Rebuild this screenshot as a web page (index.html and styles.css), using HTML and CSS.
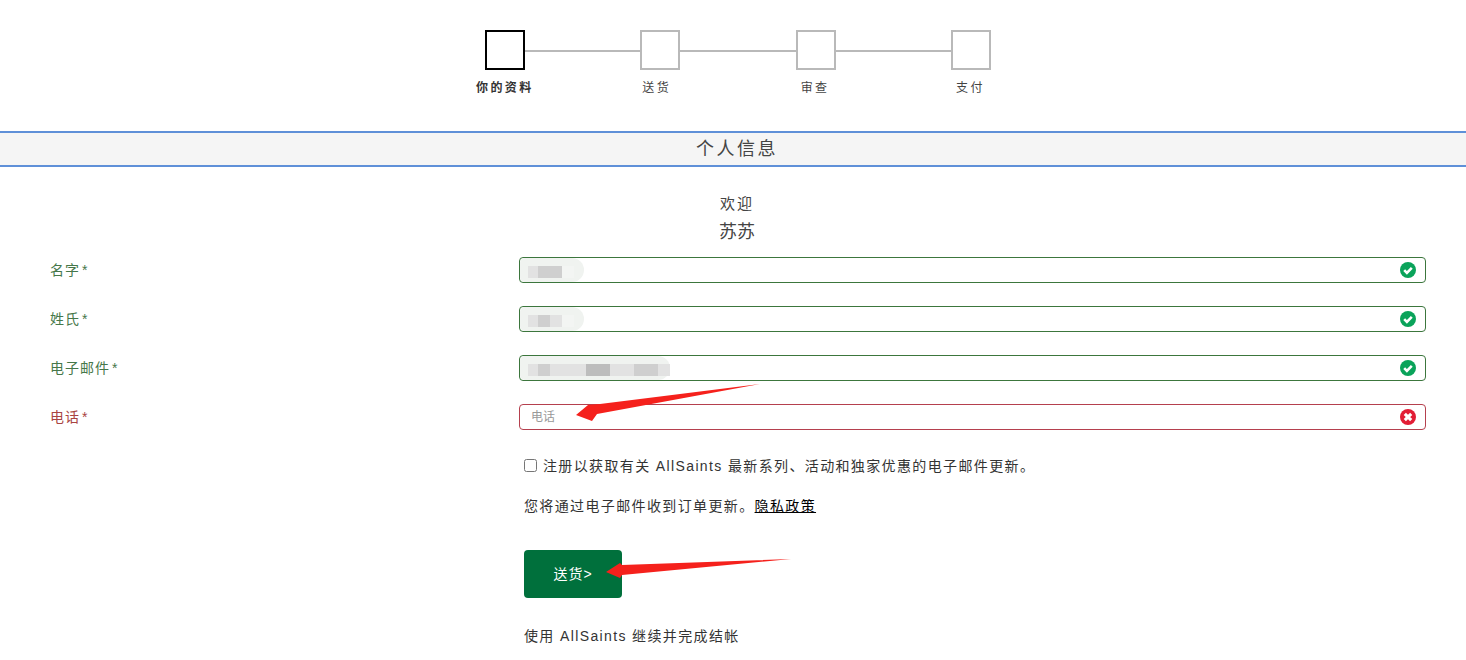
FILE: index.html
```html
<!DOCTYPE html>
<html lang="zh-CN">
<head>
    <meta charset="UTF-8">
    <meta name="viewport" content="width=device-width, initial-scale=1.0">
    <title>个人信息</title>
    <link rel="stylesheet" href="styles.css">
</head>
<body>
    <div class="page">
        <div class="steps">
            <div class="step active"><div class="step-box"></div><span class="step-label">你的资料</span></div>
            <div class="step-line"></div>
            <div class="step"><div class="step-box"></div><span class="step-label nudge">送货</span></div>
            <div class="step-line"></div>
            <div class="step"><div class="step-box"></div><span class="step-label">审查</span></div>
            <div class="step-line"></div>
            <div class="step"><div class="step-box"></div><span class="step-label">支付</span></div>
        </div>

        <h1 class="section-title">个人信息</h1>

        <div class="welcome">
            <p class="welcome-text">欢迎</p>
            <p class="welcome-name">苏苏</p>
        </div>

        <form class="details-form">
            <div class="form-row valid">
                <label>名字<span class="req">*</span></label>
                <div class="field">
                    <div class="blur">
                        <span class="blur-light w10"></span><span class="blur-dark w24"></span><span class="blur-faint w12"></span>
                    </div>
                    <svg class="field-icon" viewBox="0 0 16 16"><circle cx="8" cy="8" r="8" fill="#0aa35a"/><path d="M4.2 8.2l2.7 2.7 4.9-5" fill="none" stroke="#fff" stroke-width="2.6"/></svg>
                </div>
            </div>
            <div class="form-row valid">
                <label>姓氏<span class="req">*</span></label>
                <div class="field">
                    <div class="blur">
                        <span class="blur-light w10"></span><span class="blur-dark w12"></span><span class="blur-light w12"></span><span class="blur-faint w12"></span>
                    </div>
                    <svg class="field-icon" viewBox="0 0 16 16"><circle cx="8" cy="8" r="8" fill="#0aa35a"/><path d="M4.2 8.2l2.7 2.7 4.9-5" fill="none" stroke="#fff" stroke-width="2.6"/></svg>
                </div>
            </div>
            <div class="form-row valid">
                <label>电子邮件<span class="req">*</span></label>
                <div class="field">
                    <div class="blur blur-long">
                        <span class="blur-light w10"></span><span class="blur-dark w12"></span><span class="blur-light w36"></span><span class="blur-darker w24"></span><span class="blur-light w24"></span><span class="blur-dark w24"></span><span class="blur-light w12"></span>
                    </div>
                    <svg class="field-icon" viewBox="0 0 16 16"><circle cx="8" cy="8" r="8" fill="#0aa35a"/><path d="M4.2 8.2l2.7 2.7 4.9-5" fill="none" stroke="#fff" stroke-width="2.6"/></svg>
                </div>
            </div>
            <div class="form-row invalid">
                <label>电话<span class="req">*</span></label>
                <div class="field">
                    <span class="placeholder">电话</span>
                    <svg class="field-icon" viewBox="0 0 16 16"><circle cx="8" cy="8" r="8" fill="#e21d35"/><path d="M4.8 4.8l6.4 6.4M11.2 4.8l-6.4 6.4" fill="none" stroke="#fff" stroke-width="3.1"/></svg>
                </div>
            </div>

            <div class="extras">
                <label class="signup"><input type="checkbox"> 注册以获取有关 AllSaints 最新系列、活动和独家优惠的电子邮件更新。</label>
                <p class="notice">您将通过电子邮件收到订单更新。<a href="#">隐私政策</a></p>
                <button type="button" class="submit-btn">送货&gt;</button>
                <p class="continue-text">使用 AllSaints 继续并完成结帐</p>
            </div>
        </form>

        <!-- annotation arrows drawn on top of the screenshot -->
        <svg class="arrows" viewBox="0 0 1466 660">
            <polygon points="760,384 600,404 588,405 576,415 592,421 597,414" fill="#f5211c"/>
            <polygon points="791,559 622,565 620,563 606,572 620,578 622,575" fill="#f5211c"/>
        </svg>
    </div>
</body>
</html>
```

FILE: styles.css
```css
body {
    font-family: "Liberation Sans", "Noto Sans CJK SC", sans-serif;
    color: #333;
    margin: 0;
    background-color: #fff;
}
.page {
    position: relative;
    height: 660px;
    overflow: hidden;
}
.steps {
    display: flex;
    width: 506px;
    margin: 0 auto;
    padding-top: 30px;
    transform: translateX(5px);
}
.step {
    position: relative;
    width: 40px;
    height: 40px;
}
.step-box {
    width: 40px;
    height: 40px;
    box-sizing: border-box;
    border: 2px solid #b9b9b9;
}
.step.active .step-box {
    border-color: #000;
}
.step-label {
    position: absolute;
    top: 50px;
    left: 50%;
    transform: translateX(-52%);
    white-space: nowrap;
    font-size: 12px;
    line-height: 16px;
    letter-spacing: 2.4px;
    color: #444;
}
.step-label.nudge {
    margin-left: -3px;
}
.step.active .step-label {
    margin-left: 1px;
    font-weight: bold;
    color: #333;
}
.step-line {
    flex: 1;
    height: 2px;
    margin-top: 20px;
    background-color: #b9b9b9;
}
.section-title {
    margin: 61px 0 0;
    padding-left: 8px;
    height: 32px;
    border-top: 2px solid #5f90d8;
    border-bottom: 2px solid #5f90d8;
    background-color: #f5f5f5;
    font-size: 18px;
    font-weight: normal;
    line-height: 33px;
    letter-spacing: 2.5px;
    text-align: center;
    color: #444;
}
.welcome {
    margin-top: 27px;
    padding-left: 8px;
    text-align: center;
    color: #444;
}
.welcome p {
    margin: 0;
}
.welcome-text {
    font-size: 15px;
    line-height: 20px;
    letter-spacing: 2px;
}
.welcome-name {
    margin-top: 4px !important;
    font-size: 18px;
    line-height: 28px;
}
.details-form {
    margin-top: 11px;
    padding: 0 40px 0 50px;
}
.form-row {
    display: flex;
    align-items: center;
    height: 26px;
    margin-bottom: 23px;
}
.form-row label {
    width: 469px;
    flex-shrink: 0;
    margin-bottom: 2px;
    font-size: 14px;
    letter-spacing: 1px;
}
.req {
    margin-left: 2px;
}
.field {
    position: relative;
    flex: 1;
    height: 26px;
    box-sizing: border-box;
    display: flex;
    align-items: center;
    border: 1px solid;
    border-radius: 4px;
}
.valid label {
    color: #46774a;
}
.valid .field {
    border-color: #3c763d;
}
.invalid label {
    color: #a94442;
}
.invalid .field {
    border-color: #b5404e;
}
.placeholder {
    margin: 0 0 4px 11px;
    font-size: 12px;
    color: #999;
}
.field-icon {
    position: absolute;
    right: 9px;
    top: 4px;
    width: 16px;
    height: 16px;
}
.blur {
    display: flex;
    align-items: center;
    width: 64px;
    height: 24px;
    padding: 4px 0 0 8px;
    box-sizing: border-box;
    border-radius: 8px 20px 20px 8px;
    background-color: #f0f3f0;
    filter: blur(0.7px);
}
.blur-long {
    width: 150px;
}
.blur span {
    height: 12px;
}
.blur-faint {
    background-color: #f3f5f3;
}
.blur-light {
    background-color: #e2e2e2;
}
.blur-dark {
    background-color: #cfcfcf;
}
.blur-darker {
    background-color: #bdbdbd;
}
.w10 {
    width: 10px;
}
.w12 {
    width: 12px;
}
.w24 {
    width: 24px;
}
.w36 {
    width: 36px;
}
.extras {
    margin-top: 25px;
    padding-left: 474px;
    font-size: 14px;
    letter-spacing: 1.37px;
    color: #333;
}
.signup {
    display: flex;
    align-items: center;
    height: 20px;
}
.signup input {
    width: 13px;
    height: 13px;
    margin: 0 6px 0 0;
}
.notice {
    margin: 21px 0 0;
    line-height: 20px;
}
.notice a {
    color: #000;
}
.submit-btn {
    display: block;
    width: 98px;
    height: 48px;
    margin-top: 34px;
    padding-bottom: 4px;
    border: none;
    border-radius: 4px;
    background-color: #00703c;
    color: #fff;
    font-family: inherit;
    font-size: 14px;
    letter-spacing: 1px;
}
.continue-text {
    margin: 28px 0 0;
    line-height: 20px;
}
.arrows {
    position: absolute;
    top: 0;
    left: 0;
    width: 1466px;
    height: 660px;
    pointer-events: none;
}
```
